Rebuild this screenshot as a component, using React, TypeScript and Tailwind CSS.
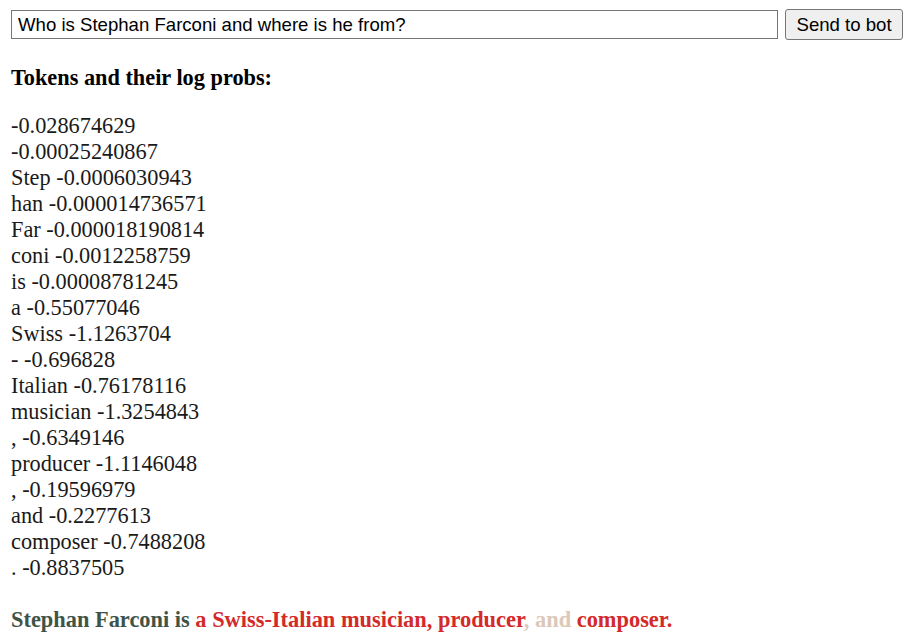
import React from "react";

const tokens: [string, string][] = [
  ["", "-0.028674629"],
  ["", "-0.00025240867"],
  ["Step", "-0.0006030943"],
  ["han", "-0.000014736571"],
  ["Far", "-0.000018190814"],
  ["coni", "-0.0012258759"],
  ["is", "-0.00008781245"],
  ["a", "-0.55077046"],
  ["Swiss", "-1.1263704"],
  ["-", "-0.696828"],
  ["Italian", "-0.76178116"],
  ["musician", "-1.3254843"],
  [",", "-0.6349146"],
  ["producer", "-1.1146048"],
  [",", "-0.19596979"],
  ["and", "-0.2277613"],
  ["composer", "-0.7488208"],
  [".", "-0.8837505"],
];

export default function App() {
  return (
    <div className="bg-white min-h-[641px] pl-[11px] pt-[9px] text-black" style={{ fontFamily: '"Liberation Serif", serif' }}>
      <div className="flex items-center gap-[7px] pr-[11px]">
        <input
          defaultValue="Who is Stephan Farconi and where is he from?"
          className="w-[768px] h-[29px] border border-[#767676] px-[6px] text-[18.6px] text-black outline-none"
          style={{ fontFamily: '"Liberation Sans", Arial, sans-serif' }}
        />
        <button
          className="w-[118px] h-[31px] bg-[#efefef] border border-[#767676] rounded-[3px] text-[18.6px] text-black"
          style={{ fontFamily: '"Liberation Sans", Arial, sans-serif' }}
        >
          Send to bot
        </button>
      </div>
      <h2 className="mt-[25px] text-[22.3px] leading-[26px] font-bold">Tokens and their log probs:</h2>
      <div className="mt-[22px] text-[22.3px] leading-[26px] text-[#1a1a1a]">
        {tokens.map(([t, p], i) => (
          <div key={i}>{t ? `${t} ${p}` : p}</div>
        ))}
      </div>
      <p className="mt-[26px] text-[22.4px] leading-[26px] font-bold">
        <span className="text-[#3f5448]">Stephan Farconi is </span>
        <span className="text-[#d42a2a]">a Swiss-Italian musician, producer</span>
        <span className="text-[#dcc8b8]">, and</span>
        <span className="text-[#d42a2a]"> composer.</span>
      </p>
    </div>
  );
}
